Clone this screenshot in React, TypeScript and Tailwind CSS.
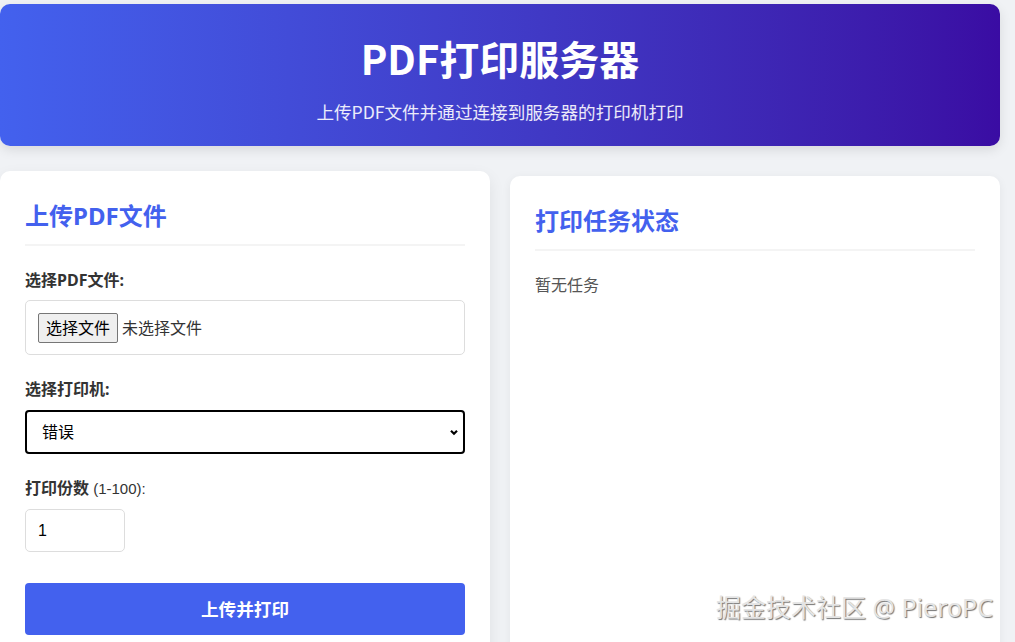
import React from "react";

export default function App() {
  return (
    <div className="relative h-[642px] w-[1015px] overflow-hidden bg-[#f0f2f5] font-['Noto_Sans','Noto_Sans_CJK_SC',sans-serif] text-[#333]">
      <div className="w-[1000px] pt-[4px]">
        <header className="flex h-[142px] flex-col items-center rounded-[10px] bg-gradient-to-r from-[#4361ee] to-[#3a0ca3] pt-[30px] text-white shadow-[0_4px_12px_rgba(0,0,0,0.1)]">
          <h1 className="font-['Noto_Sans_CJK_SC',sans-serif] text-[40px] font-bold leading-[48px]">PDF打印服务器</h1>
          <p className="mt-[17px] font-['Noto_Sans_CJK_SC',sans-serif] text-[17.6px] leading-[26px] text-white/90">上传PDF文件并通过连接到服务器的打印机打印</p>
        </header>

        <div className="mt-[30px] grid grid-cols-2 gap-[20px]">
          <section className="h-[700px] -translate-y-[5px] rounded-[10px] bg-white p-[25px] shadow-[0_6px_16px_rgba(0,0,0,0.08)]">
            <h2 className="border-b-2 border-[#f4f4f4] pb-[10px] pt-[2px] text-[24px] font-bold leading-[36px] text-[#4361ee]">上传PDF文件</h2>

            <div className="mt-[22px]">
              <div className="text-[16px] font-bold leading-[24px] text-[#333]">选择PDF文件:</div>
              <div className="mt-[8px] flex h-[55px] items-center rounded-[5px] border border-[#ddd] px-[12px]">
                <div className="flex h-[30px] w-[80px] items-center justify-center rounded-[2px] border border-[#767676] bg-[#efefef] text-[16px] text-black">选择文件</div>
                <span className="ml-[4px] text-[16px] text-[#333]">未选择文件</span>
              </div>
            </div>

            <div className="mt-[22px]">
              <div className="text-[16px] font-bold leading-[24px] text-[#333]">选择打印机:</div>
              <div className="mt-[9px] flex h-[44px] items-center justify-between rounded-[4px] border-2 border-black pl-[15px] pr-[4px]">
                <span className="text-[16px] text-black">错误</span>
                <svg width="10" height="7" viewBox="0 0 10 7">
                  <path d="M2 1.8 L5 4.8 L8 1.8" fill="none" stroke="#000" strokeWidth="2.2" />
                </svg>
              </div>
            </div>

            <div className="mt-[22px]">
              <div className="text-[16px] leading-[24px] text-[#333]">
                <span className="font-bold">打印份数</span>
                <span className="font-['Liberation_Sans',sans-serif] text-[15px]"> (1-100):</span>
              </div>
              <div className="mt-[8px] flex h-[43px] w-[100px] items-center rounded-[5px] border border-[#ddd] px-[12px] font-['Liberation_Sans',sans-serif] text-[16px] text-black">1</div>
            </div>

            <button className="mt-[31px] flex h-[52px] w-full items-center justify-center rounded-[4px] bg-[#4361ee] text-[17.6px] font-bold text-white">上传并打印</button>
          </section>

          <section className="rounded-[10px] bg-white p-[25px] shadow-[0_2px_10px_rgba(0,0,0,0.06)]">
            <h2 className="border-b-2 border-[#f4f4f4] pb-[10px] pt-[2px] text-[24px] font-bold leading-[36px] text-[#4361ee]">打印任务状态</h2>
            <p className="mt-[22px] text-[16px] leading-[24px] text-[#555]">暂无任务</p>
          </section>
        </div>
      </div>

      <div className="absolute left-[716px] top-[590px] whitespace-nowrap font-['Noto_Sans','Noto_Sans_CJK_SC',sans-serif] text-[25px] leading-[34px] text-[#e4e4e4] [text-shadow:1px_1px_1px_rgba(0,0,0,0.55)]">
        掘金技术社区 @ PieroPC
      </div>
    </div>
  );
}
